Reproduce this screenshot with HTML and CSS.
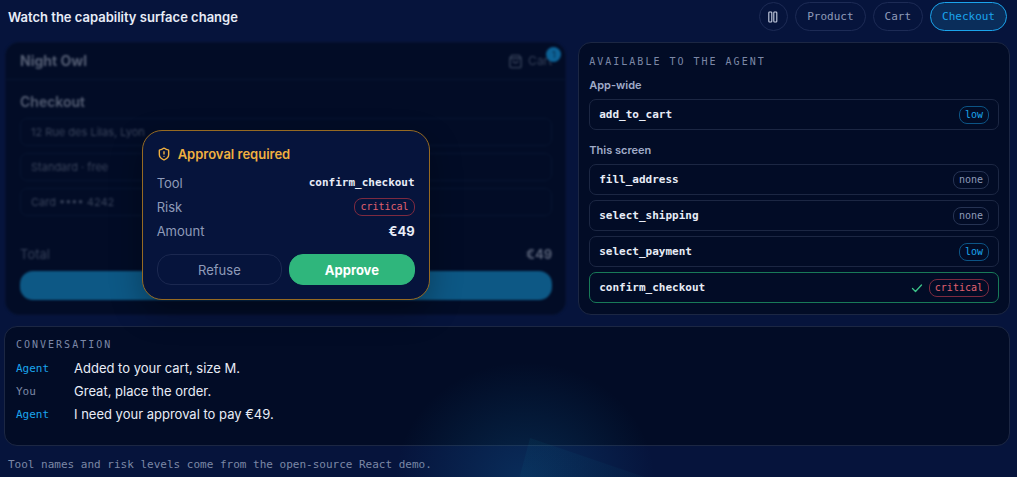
FILE: index.html
```html
<!DOCTYPE html>
<html lang="en">
<head>
  <meta charset="UTF-8">
  <meta name="viewport" content="width=device-width, initial-scale=1.0">
  <title>Watch the capability surface change</title>
  <link rel="stylesheet" href="styles.css">
</head>
<body>
  <main class="demo">
    <header class="topbar">
      <h1>Watch the capability surface change</h1>
      <nav class="steps">
        <button class="pill pause" type="button" aria-label="Pause">
          <svg width="14" height="14" viewBox="0 0 14 14" fill="none" stroke="currentColor" stroke-width="1.1">
            <rect x="2.8" y="2" width="3" height="10" rx="0.8"/>
            <rect x="7.8" y="2" width="3" height="10" rx="0.8"/>
          </svg>
        </button>
        <button class="pill" type="button">Product</button>
        <button class="pill" type="button">Cart</button>
        <button class="pill active" type="button">Checkout</button>
      </nav>
    </header>

    <div class="columns">
      <section class="shop">
        <div class="shop-card">
          <div class="shop-head">
            <strong>Night Owl</strong>
            <span class="cart">
              <svg width="15" height="15" viewBox="0 0 16 16" fill="none" stroke="currentColor" stroke-width="1.5" stroke-linejoin="round">
                <path d="M4 1.5h8l2 3V13a1.5 1.5 0 0 1-1.5 1.5h-9A1.5 1.5 0 0 1 2 13V4.5z"/>
                <path d="M2 4.5h12M5.5 7a2.5 2.5 0 0 0 5 0"/>
              </svg>
              Cart
              <span class="count">1</span>
            </span>
          </div>
          <div class="shop-body">
            <h2>Checkout</h2>
            <ul class="fields">
              <li>12 Rue des Lilas, Lyon</li>
              <li>Standard · free</li>
              <li>Card •••• 4242</li>
            </ul>
            <div class="total"><span>Total</span><strong>€49</strong></div>
            <div class="pay"></div>
          </div>
        </div>

        <div class="overlay">
          <div class="approval" role="dialog" aria-labelledby="approval-title">
            <h2 id="approval-title">
              <svg width="14" height="14" viewBox="0 0 24 24" fill="none" stroke="currentColor" stroke-width="2.4" stroke-linecap="round" stroke-linejoin="round">
                <path d="M20 13c0 5-3.5 7.5-7.66 8.95a1 1 0 0 1-.67-.01C7.5 20.5 4 18 4 13V6a1 1 0 0 1 1-1c2 0 4.5-1.2 6.24-2.72a1.17 1.17 0 0 1 1.52 0C14.51 3.81 17 5 19 5a1 1 0 0 1 1 1z"/>
                <path d="M12 8v4M12 16h.01"/>
              </svg>
              Approval required
            </h2>
            <dl>
              <div><dt>Tool</dt><dd class="mono">confirm_checkout</dd></div>
              <div><dt>Risk</dt><dd><span class="badge critical">critical</span></dd></div>
              <div><dt>Amount</dt><dd class="amount">€49</dd></div>
            </dl>
            <div class="actions">
              <button class="refuse" type="button">Refuse</button>
              <button class="approve" type="button">Approve</button>
            </div>
          </div>
        </div>
      </section>

      <section class="panel tools">
        <h2 class="label">AVAILABLE TO THE AGENT</h2>
        <h3>App-wide</h3>
        <ul>
          <li><code>add_to_cart</code><span class="badge low">low</span></li>
        </ul>
        <h3>This screen</h3>
        <ul>
          <li><code>fill_address</code><span class="badge">none</span></li>
          <li><code>select_shipping</code><span class="badge">none</span></li>
          <li><code>select_payment</code><span class="badge low">low</span></li>
          <li class="called">
            <code>confirm_checkout</code>
            <svg width="12" height="12" viewBox="0 0 12 12" fill="none" stroke="currentColor" stroke-width="1.3" stroke-linecap="round" stroke-linejoin="round">
              <path d="M1.5 6.5l3 3L10.5 3"/>
            </svg>
            <span class="badge critical">critical</span>
          </li>
        </ul>
      </section>
    </div>

    <section class="panel conversation">
      <h2 class="label">CONVERSATION</h2>
      <dl>
        <dt class="agent">Agent</dt><dd>Added to your cart, size M.</dd>
        <dt>You</dt><dd>Great, place the order.</dd>
        <dt class="agent">Agent</dt><dd>I need your approval to pay €49.</dd>
      </dl>
    </section>

    <p class="note">Tool names and risk levels come from the open-source React demo.</p>

    <div class="glow"><div class="beam"></div></div>
  </main>
</body>
</html>
```
FILE: styles.css
```css
:root {
  --bg: #06143c;
  --panel: #020c26;
  --line: #1c2743;
  --text: #e8ecf7;
  --muted: #8f9bb9;
  --blue: #1ba4ec;
  --green: #2fb67c;
  --red: #e0606e;
  --amber: #f0b040;
  --mono: "DejaVu Sans Mono", "Liberation Mono", monospace;
}

* {
  box-sizing: border-box;
}

body {
  margin: 0;
  background: var(--bg);
  color: var(--text);
  font-family: Inter, "Liberation Sans", sans-serif;
  font-size: 13px;
  line-height: 16px;
}

h1, h2, h3, p, ul, dl, dd {
  margin: 0;
  padding: 0;
}

ul {
  list-style: none;
}

button {
  font: inherit;
  cursor: pointer;
}

svg {
  display: block;
  flex: none;
}

.demo {
  position: relative;
  min-height: 100vh;
  padding: 2px 7px 4px 4px;
  overflow: hidden;
}

/* top bar */
.topbar {
  display: flex;
  justify-content: space-between;
  align-items: center;
  padding: 0 3px 0 4px;
}

.topbar h1 {
  font-size: 13px;
  font-weight: 600;
}

.steps {
  display: flex;
  gap: 7px;
}

.pill {
  height: 29px;
  padding: 0 11px;
  border: 1px solid #1d2b55;
  border-radius: 15px;
  background: transparent;
  color: var(--muted);
  font-family: var(--mono);
  font-size: 11px;
}

.pill.pause {
  width: 29px;
  padding: 0 6px;
  color: #c9d0e2;
}

.pill.active {
  border-color: var(--blue);
  background: #0a2d5a;
  color: var(--blue);
}

/* two columns */
.columns {
  display: grid;
  grid-template-columns: 13fr 10fr;
  gap: 12px;
  margin: 11px 0 11px 1px;
}

.panel {
  border: 1px solid var(--line);
  border-radius: 13px;
  background: var(--panel);
}

.label {
  color: #7c88a6;
  font-family: var(--mono);
  font-size: 10px;
  font-weight: 400;
  letter-spacing: 2px;
}

.badge {
  height: 18px;
  padding: 0 5px;
  border: 1px solid #263353;
  border-radius: 8px;
  color: var(--muted);
  font-family: var(--mono);
  font-size: 10px;
  line-height: 16px;
}

.badge.low {
  border-color: #0c5485;
  color: var(--blue);
}

.badge.critical {
  border-color: #7c2a40;
  color: var(--red);
}

/* tools */
.tools {
  padding: 11px 10px;
}

.tools h3 {
  margin: 7px 0 6px;
  color: #a0abc8;
  font-size: 11px;
  font-weight: 600;
}

.tools ul + h3 {
  margin-top: 12px;
}

.tools ul {
  display: grid;
  gap: 5px;
}

.tools li {
  display: flex;
  align-items: center;
  gap: 6px;
  height: 31px;
  padding: 0 9px;
  border: 1px solid var(--line);
  border-radius: 7px;
}

.tools code {
  flex: 1;
  font-family: var(--mono);
  font-size: 11px;
  font-weight: 700;
}

.tools .called {
  border-color: #187a58;
}

.called svg {
  color: #3cc48a;
}

/* shop */
.shop {
  position: relative;
}

.shop-card {
  height: 100%;
  border: 1px solid #07122d;
  border-radius: 14px;
  background: var(--panel);
  color: #565f75;
  filter: blur(1px);
}

.shop-head {
  display: flex;
  justify-content: space-between;
  align-items: center;
  height: 37px;
  padding: 0 13px 0 14px;
  border-bottom: 1px solid #071531;
  font-size: 14px;
}

.cart {
  position: relative;
  display: flex;
  align-items: center;
  gap: 5px;
  color: #354059;
  font-size: 12px;
}

.count {
  position: absolute;
  top: -6px;
  right: -9px;
  width: 15px;
  height: 15px;
  border-radius: 50%;
  background: #0d6296;
  color: #052a4a;
  font-size: 9px;
  line-height: 15px;
  text-align: center;
}

.shop-body {
  padding: 14px 13px 13px 14px;
}

.shop-body h2 {
  font-size: 14px;
  font-weight: 600;
}

.fields {
  display: grid;
  gap: 7px;
  margin: 8px 0 30px;
}

.fields li {
  padding: 5px 10px;
  border: 1px solid #071531;
  border-radius: 7px;
  color: #39435b;
  font-size: 11px;
}

.total {
  display: flex;
  justify-content: space-between;
}

.total span {
  color: #354059;
}

.pay {
  height: 29px;
  margin-top: 9px;
  border-radius: 13px;
  background: #0d5885;
}

/* approval dialog */
.overlay {
  position: absolute;
  inset: 0;
  display: flex;
  justify-content: center;
  align-items: flex-end;
  padding-bottom: 15px;
}

.approval {
  width: 288px;
  padding: 15px 14px 14px;
  border: 1px solid #966a22;
  border-radius: 20px;
  background: var(--bg);
  box-shadow: 0 12px 32px rgba(0, 0, 0, 0.3);
}

.approval h2 {
  display: flex;
  align-items: center;
  gap: 7px;
  margin-bottom: 9px;
  color: var(--amber);
  font-size: 13px;
  font-weight: 600;
}

.approval dl div {
  display: flex;
  justify-content: space-between;
  align-items: center;
  height: 24px;
}

.approval dt {
  color: var(--muted);
}

.approval dd {
  display: flex;
}

.approval .mono {
  font-family: var(--mono);
  font-size: 11px;
  font-weight: 700;
}

.approval .amount {
  font-weight: 700;
}

.actions {
  display: grid;
  grid-template-columns: 1fr 1fr;
  gap: 7px;
  margin-top: 11px;
}

.actions button {
  height: 31px;
  border: 1px solid #1b2850;
  border-radius: 14px;
  background: transparent;
  color: var(--muted);
}

.actions .approve {
  border-color: var(--green);
  background: var(--green);
  color: #fff;
  font-weight: 700;
}

/* conversation */
.conversation {
  padding: 10px 11px 19px;
}

.conversation dl {
  display: grid;
  grid-template-columns: 50px 1fr;
  gap: 0 8px;
  margin-top: 4px;
  line-height: 23px;
}

.conversation dt {
  color: #7c88a6;
  font-family: var(--mono);
  font-size: 11px;
}

.conversation .agent {
  color: var(--blue);
}

.note {
  margin: 11px 4px 0;
  color: #7c88a6;
  font-family: var(--mono);
  font-size: 11px;
}

/* light rising from the bottom edge */
.glow {
  position: absolute;
  bottom: -125px;
  left: 52%;
  width: 260px;
  height: 240px;
  margin-left: -134px;
  background: radial-gradient(closest-side, rgba(18, 110, 170, 0.28), rgba(18, 110, 170, 0));
  pointer-events: none;
}

.beam {
  width: 260px;
  height: 115px;
  background: linear-gradient(to right, rgba(10, 120, 150, 0.12), rgba(10, 120, 150, 0.05));
  clip-path: polygon(52% 66%, 96% 100%, 48% 100%);
}
```
